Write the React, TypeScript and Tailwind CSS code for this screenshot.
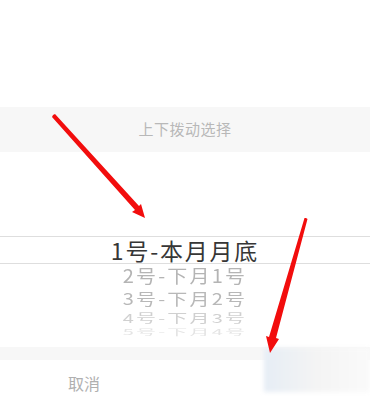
import React from 'react';

const font = { fontFamily: '"Noto Sans CJK SC", "Noto Sans", sans-serif' };

// 휠 아래쪽 옵션 (점점 눌리고 흐려짐)
const rest = [
  { label: '2号-下月1号', cls: 'h-[24px] text-[#b4b4b4] scale-y-[0.92]' },
  { label: '3号-下月2号', cls: 'h-[21px] text-[#b8b8b8] scale-y-[0.8]' },
  { label: '4号-下月3号', cls: 'h-[17px] text-[#d0d0d0] scale-y-[0.62]' },
  { label: '5号-下月4号', cls: 'h-[12px] text-[#e4e4e4] scale-y-[0.4]' },
];

function Arrows() {
  return (
    <svg className="absolute inset-0 pointer-events-none" width="370" height="405" viewBox="0 0 370 405">
      {/* 왼쪽 화살표 */}
      <polygon points="53,115 55,114 139,206 141,204 145,218 132,212 135,210 52,117" fill="#f20d0d" />
      {/* 오른쪽 화살표 */}
      <polygon points="306,218 307.5,219 276,338 279,339 270,353 266,336 269,337 304.5,218" fill="#f20d0d" />
    </svg>
  );
}

export default function App() {
  return (
    <div className="relative w-[370px] h-[405px] bg-white overflow-hidden" style={font}>
      <div className="h-[107px]" />

      {/* 안내 */}
      <div className="h-[45px] bg-[#f7f7f7] flex items-center justify-center text-[15px] tracking-[0.5px] text-[#b8b8b8]">
        上下拨动选择
      </div>

      {/* 피커 */}
      <div className="h-[195px] flex flex-col pt-[84px]">
        <div className="h-[28px] border-y border-[#dedede] flex items-center justify-center text-[23px] tracking-[1.8px] text-[#363636] leading-none">
          1号-本月月底
        </div>
        {rest.map((r) => (
          <div key={r.label} className={`flex items-center justify-center text-[20px] tracking-[2.2px] leading-none ${r.cls}`}>
            {r.label}
          </div>
        ))}
      </div>

      <div className="h-[13px] bg-[#f7f7f7]" />

      {/* 하단 버튼 */}
      <div className="h-[45px] flex items-center">
        <span className="pl-[68px] text-[16px] text-[#b0b0b0]">取消</span>
      </div>

      {/* 가려진 영역 */}
      <div className="absolute left-[264px] top-[348px] w-[106px] h-[44px] bg-gradient-to-r from-[#e6edf5] via-[#f4f4f4] to-[#fafafa] blur-[2px]" />

      <Arrows />
    </div>
  );
}
